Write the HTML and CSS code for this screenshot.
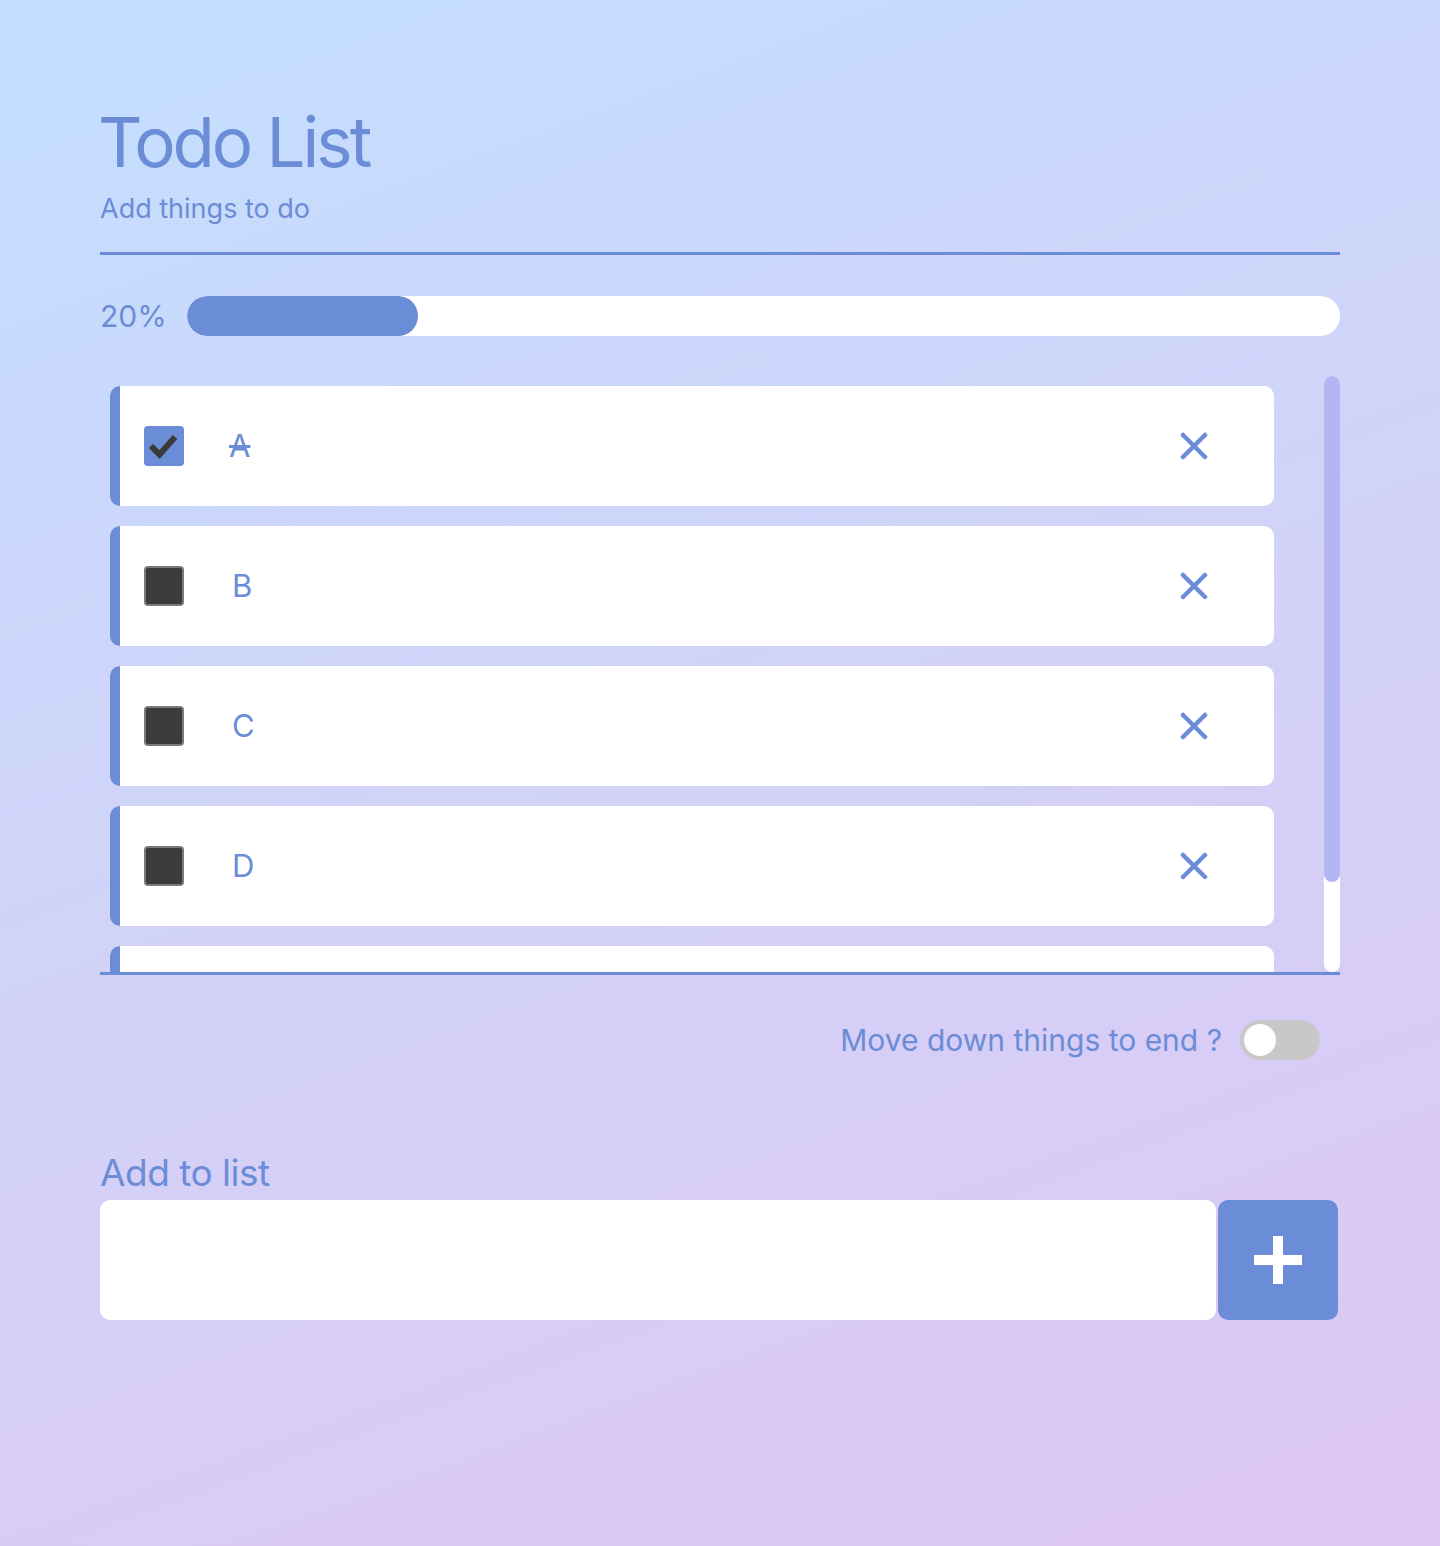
FILE: index.html
```html
<!DOCTYPE html>
<html lang="en">
<head>
<meta charset="utf-8">
<title>Todo List</title>
<link rel="stylesheet" href="styles.css">
</head>
<body>
<main class="app">
  <header class="head">
    <h1 class="title">Todo List</h1>
    <p class="subtitle">Add things to do</p>
  </header>

  <div class="progress">
    <span class="pct">20%</span>
    <div class="bar"><div class="fill" style="width:20%"></div></div>
  </div>

  <div class="list-wrap">
    <ul class="list">
      <li class="item done">
        <span class="check checked"><svg viewBox="0 0 40 40" width="40" height="40"><path d="M7 20 L15.5 28.5 L31 11" fill="none" stroke="#3a3a3a" stroke-width="6"/></svg></span>
        <span class="label">A</span>
        <span class="del"><svg viewBox="0 0 28 28" width="28" height="28"><path d="M3 3 L25 25 M25 3 L3 25" stroke="#6b8cd6" stroke-width="4.5" stroke-linecap="round"/></svg></span>
      </li>
      <li class="item">
        <span class="check"></span>
        <span class="label">B</span>
        <span class="del"><svg viewBox="0 0 28 28" width="28" height="28"><path d="M3 3 L25 25 M25 3 L3 25" stroke="#6b8cd6" stroke-width="4.5" stroke-linecap="round"/></svg></span>
      </li>
      <li class="item">
        <span class="check"></span>
        <span class="label">C</span>
        <span class="del"><svg viewBox="0 0 28 28" width="28" height="28"><path d="M3 3 L25 25 M25 3 L3 25" stroke="#6b8cd6" stroke-width="4.5" stroke-linecap="round"/></svg></span>
      </li>
      <li class="item">
        <span class="check"></span>
        <span class="label">D</span>
        <span class="del"><svg viewBox="0 0 28 28" width="28" height="28"><path d="M3 3 L25 25 M25 3 L3 25" stroke="#6b8cd6" stroke-width="4.5" stroke-linecap="round"/></svg></span>
      </li>
      <li class="item">
        <span class="check"></span>
        <span class="label">E</span>
        <span class="del"><svg viewBox="0 0 28 28" width="28" height="28"><path d="M3 3 L25 25 M25 3 L3 25" stroke="#6b8cd6" stroke-width="4.5" stroke-linecap="round"/></svg></span>
      </li>
    </ul>
    <div class="scrollbar"><div class="thumb"></div></div>
  </div>

  <div class="toggle-row">
    <span class="toggle-label">Move down things to end ?</span>
    <span class="switch"><span class="knob"></span></span>
  </div>

  <section class="add">
    <h2 class="add-title">Add to list</h2>
    <div class="add-row">
      <input class="add-input" type="text" aria-label="New item">
      <button class="add-btn" type="button" aria-label="Add"><svg viewBox="0 0 52 52" width="52" height="52"><path d="M26 2 V50 M2 26 H50" stroke="#fff" stroke-width="10"/></svg></button>
    </div>
  </section>
</main>
</body>
</html>
```

FILE: styles.css
```css
* { box-sizing: border-box; }

html, body {
  margin: 0;
  padding: 0;
}

body {
  min-height: 1546px;
  background: linear-gradient(160deg, #c3dfff 0%, #d2d2f8 50%, #dec6f3 100%);
  font-family: Inter, "Noto Sans", "Liberation Sans", sans-serif;
  color: #6b8cd6;
}

.app {
  width: 1240px;
  margin: 0 0 0 100px;
  padding-top: 99px;
}

.head {
  border-bottom: 3px solid #6b8cd6;
  padding-bottom: 23px;
}

.title {
  margin: 0 0 0 -2px;
  font-size: 69px;
  font-weight: 400;
  line-height: 86px;
  letter-spacing: -3px;
}

.subtitle {
  margin: 4px 0 0 0;
  font-size: 27px;
  line-height: 40px;
  font-weight: 400;
}

.progress {
  display: flex;
  align-items: center;
  gap: 20px;
  margin-top: 41px;
  height: 40px;
}

.pct {
  font-size: 30px;
  line-height: 40px;
  width: 67px;
}

.bar {
  flex: 1;
  height: 40px;
  border-radius: 20px;
  background: #fff;
  overflow: hidden;
}

.fill {
  height: 100%;
  background: #6b8cd6;
  border-radius: 20px;
}

.list-wrap {
  display: flex;
  margin-top: 40px;
  height: 599px;
  border-bottom: 3px solid #6b8cd6;
}

.list {
  flex: 1;
  list-style: none;
  margin: 0;
  padding: 10px 50px 0 10px;
  overflow: hidden;
}

.scrollbar {
  flex: none;
  width: 16px;
  height: 596px;
  background: #fff;
  border-radius: 8px;
}

.thumb {
  height: 506px;
  background: #b3b6f3;
  border-radius: 8px;
}

.item {
  display: flex;
  align-items: center;
  height: 120px;
  margin-bottom: 20px;
  background: #fff;
  border-left: 10px solid #6b8cd6;
  border-radius: 10px;
  padding: 0 66px 0 24px;
}

.check {
  width: 40px;
  height: 40px;
  flex: none;
  border-radius: 4px;
  background: #3b3b3b;
  border: 2px solid #7a7a7a;
}

.check.checked {
  background: #6b8cd6;
  border: none;
}

.check svg { display: block; }

.label {
  flex: 1;
  margin-left: 48px;
  font-size: 31px;
  line-height: 40px;
}

.done .label {
  text-decoration: line-through;
  margin-left: 45px;
}

.del {
  width: 28px;
  height: 28px;
  flex: none;
}
.del svg { display: block; }

.toggle-row {
  display: flex;
  justify-content: flex-end;
  align-items: center;
  gap: 18px;
  margin-top: 45px;
  padding-right: 20px;
  height: 40px;
}

.toggle-label {
  font-size: 30px;
  line-height: 40px;
}

.switch {
  position: relative;
  width: 80px;
  height: 40px;
  border-radius: 20px;
  background: #c8c8c8;
}

.knob {
  position: absolute;
  left: 4px;
  top: 4px;
  width: 32px;
  height: 32px;
  border-radius: 50%;
  background: #fff;
}

.add {
  margin-top: 88px;
}

.add-title {
  margin: 0;
  font-size: 37px;
  font-weight: 400;
  line-height: 50px;
  letter-spacing: -0.5px;
}

.add-row {
  display: flex;
  gap: 2px;
  margin-top: 2px;
}

.add-input {
  flex: none;
  width: 1116px;
  height: 120px;
  border: none;
  border-radius: 10px;
  background: #fff;
  outline: none;
  font-size: 30px;
  padding: 0 20px;
  font-family: inherit;
}

.add-btn {
  width: 120px;
  height: 120px;
  border: none;
  border-radius: 10px;
  background: #6b8cd6;
  display: flex;
  align-items: center;
  justify-content: center;
  padding: 0;
}
.add-btn svg { display: block; }
```
